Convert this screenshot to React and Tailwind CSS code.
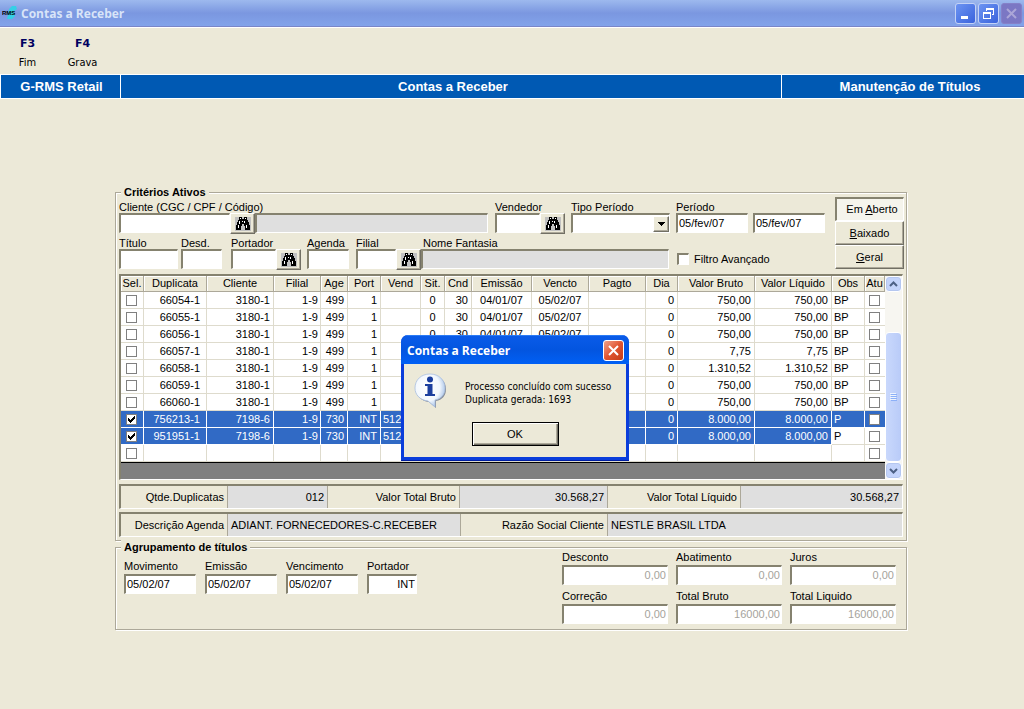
const columns = [
  { key: 'dup', label: 'Duplicata', width: 63, cell: 'text-right pr-[6px]' },
  { key: 'cli', label: 'Cliente', width: 67, cell: 'text-right pr-[3px]' },
  { key: 'fil', label: 'Filial', width: 47, cell: 'text-right pr-[2px]' },
  { key: 'age', label: 'Age', width: 27, cell: 'text-right pr-[3px]' },
  { key: 'port', label: 'Port', width: 33, cell: 'text-right pr-[3px]' },
  { key: 'vend', label: 'Vend', width: 40, cell: 'text-left pl-[2px]' },
  { key: 'sit', label: 'Sit.', width: 24, cell: 'text-center' },
  { key: 'cnd', label: 'Cnd', width: 27, cell: 'text-right pr-[3px]' },
  { key: 'emi', label: 'Emissão', width: 60, cell: 'text-center' },
  { key: 'ven', label: 'Vencto', width: 57, cell: 'text-center' },
  { key: 'pag', label: 'Pagto', width: 57, cell: 'text-center' },
  { key: 'dia', label: 'Dia', width: 32, cell: 'text-right pr-[3px]' },
  { key: 'bruto', label: 'Valor Bruto', width: 77, cell: 'text-right pr-[3px]' },
  { key: 'liq', label: 'Valor Líquido', width: 77, cell: 'text-right pr-[3px]' },
  { key: 'obs', label: 'Obs', width: 33, cell: 'text-left pl-[2px]' },
]

const base = { cli: '3180-1', fil: '1-9', age: '499', port: '1', dia: '0', obs: 'BP' }
const open = { ...base, sit: '0', cnd: '30', emi: '04/01/07', ven: '05/02/07' }
const picked = { cli: '7198-6', fil: '1-9', age: '730', port: 'INT', vend: '512', dia: '0', obs: 'P', checked: true }

const rows = [
  { ...open, dup: '66054-1', bruto: '750,00', liq: '750,00' },
  { ...open, dup: '66055-1', bruto: '750,00', liq: '750,00' },
  { ...open, dup: '66056-1', bruto: '750,00', liq: '750,00' },
  { ...base, dup: '66057-1', bruto: '7,75', liq: '7,75' },
  { ...base, dup: '66058-1', bruto: '1.310,52', liq: '1.310,52' },
  { ...base, dup: '66059-1', bruto: '750,00', liq: '750,00' },
  { ...base, dup: '66060-1', bruto: '750,00', liq: '750,00' },
  { ...picked, dup: '756213-1', bruto: '8.000,00', liq: '8.000,00', fullRow: true },
  { ...picked, dup: '951951-1', bruto: '8.000,00', liq: '8.000,00' },
  {},
]

const sunken = 'border-t-2 border-l-2 border-b border-r border-t-[#85826f] border-l-[#85826f] border-b-white border-r-white'
const raised = 'border border-t-white border-l-white border-b-[#716f64] border-r-[#716f64] shadow-[inset_-1px_-1px_0_#aca899]'

function Binoculars() {
  return (
    <svg viewBox="0 0 16 14" className="w-4 h-[14px] bg-[#c0c0c0]" shapeRendering="crispEdges">
      <path d="M4 0h3v2h2V0h3v3h1v2h1v3h1v5h-5V9H9V7H7v2H6v4H1V8h1V5h1V3h1z" fill="#000" />
      <path d="M5 1h1v1H5zM10 1h1v1h-1zM4 4h1v3H4zM9 4h1v2H9zM3 8h1v3H3zM11 8h1v3h-1zM7 4h1v1H7z" fill="#fff" />
    </svg>
  )
}

function SearchButton({ label }) {
  return (
    <button aria-label={label} className={`w-[25px] h-[21px] -mb-px shrink-0 grid place-items-center bg-[#ece9d8] ${raised}`}>
      <Binoculars />
    </button>
  )
}

function Field({ id, label, value, width = 'w-full', className = '', inputClass = '', children, ...rest }) {
  return (
    <div className={`flex flex-col ${className}`}>
      <label htmlFor={id} className="h-3 leading-3 whitespace-nowrap">{label}</label>
      <div className="flex">
        <input id={id} defaultValue={value} className={`${width} min-w-0 h-5 px-px pb-[2px] bg-white rounded-none outline-none ${sunken} ${inputClass}`} {...rest} />
        {children}
      </div>
    </div>
  )
}

function Check({ label, checked }) {
  return (
    <span className="inline-grid place-items-center align-top">
      <input type="checkbox" aria-label={label} defaultChecked={checked} className="col-start-1 row-start-1 appearance-none w-[11px] h-[11px] bg-white border border-[#808080]" />
      {checked && (
        <svg viewBox="0 0 7 7" className="col-start-1 row-start-1 w-[7px] h-[7px] pointer-events-none" shapeRendering="crispEdges">
          <path d="M0 2h1v1h1v1h1V3h1V2h1V1h1V0h1v3H6v1H5v1H4v1H3v1H2V6H1V5H0z" fill="#000" />
        </svg>
      )}
    </span>
  )
}

function Group({ title, className = '', children }) {
  return (
    <fieldset className={`relative min-w-0 border border-[#aca899] shadow-[1px_1px_0_#fff,inset_1px_1px_0_#fff] ${className}`}>
      <legend className="absolute -top-2 left-[5px] px-[3px] bg-[#ece9d8] font-bold leading-[14px] whitespace-nowrap">{title}</legend>
      {children}
    </fieldset>
  )
}

function Grid() {
  return (
    <div className={`flex mt-[5px] bg-[#808080] ${sunken}`}>
      <div className="flex-1 min-w-0 pb-4">
        <table className="w-full table-fixed border-separate border-spacing-0 border-b border-black">
          <colgroup>
            <col style={{ width: 23 }} />
            {columns.map(c => <col key={c.key} style={{ width: c.width }} />)}
            <col style={{ width: 20 }} />
          </colgroup>
          <thead>
            <tr className="bg-[#ece9d8]">
              {['Sel.', ...columns.map(c => c.label), 'Atu'].map(label => (
                <th key={label} className="h-4 p-0 leading-[15px] font-normal text-center whitespace-nowrap overflow-hidden border-r border-b border-[#aca899] shadow-[inset_1px_1px_0_#fff]">
                  {label}
                </th>
              ))}
            </tr>
          </thead>
          <tbody>
            {rows.map((row, i) => {
              const on = 'bg-[#316ac5] text-white border-white'
              const off = 'bg-white border-[#dedbcd]'
              return (
                <tr key={i}>
                  <td className={`h-[17px] p-0 pr-px leading-none text-center border-r border-b ${row.checked ? on : off}`}>
                    <Check label={`Selecionar ${row.dup || ''}`} checked={row.checked} />
                  </td>
                  {columns.map(c => {
                    const selected = row.checked && (c.key !== 'obs' || row.fullRow)
                    return (
                      <td key={c.key} className={`h-[17px] py-0 px-0 leading-4 whitespace-nowrap border-r border-b ${c.cell} ${selected ? on : off}`}>
                        {row[c.key]}
                      </td>
                    )
                  })}
                  <td className={`h-[17px] p-0 pr-px leading-none text-center border-b ${row.fullRow ? on : off}`}>
                    <Check label={`Atualizar ${row.dup || ''}`} />
                  </td>
                </tr>
              )
            })}
          </tbody>
        </table>
      </div>

      {/* Scrollbar */}
      <div className="w-[17px] shrink-0 flex flex-col bg-[#f7f6f1]">
        <button aria-label="Rolar para cima" className="h-4 rounded-sm border border-white bg-[#c4d4fb] grid place-items-center shadow-[inset_0_0_0_1px_#b5c7f0]">
          <svg viewBox="0 0 9 6" className="w-[9px] h-[6px]"><path d="M1 5l3.500-3.500L8 5" fill="none" stroke="#4d6185" strokeWidth="2" /></svg>
        </button>
        <div className="flex-[40]" />
        <div className="flex-[130] rounded-sm border border-white bg-linear-to-r from-[#c9d8fc] to-[#b9cbf8] grid place-items-center">
          <svg viewBox="0 0 7 8" className="w-[7px] h-2" shapeRendering="crispEdges">
            <path d="M0 0h6v1H0zM0 2h6v1H0zM0 4h6v1H0zM0 6h6v1H0z" fill="#eef4fe" />
            <path d="M1 1h6v1H1zM1 3h6v1H1zM1 5h6v1H1zM1 7h6v1H1z" fill="#8cb0f8" />
          </svg>
        </div>
        <button aria-label="Rolar para baixo" className="h-[17px] rounded-sm border border-white bg-[#c4d4fb] grid place-items-center shadow-[inset_0_0_0_1px_#b5c7f0]">
          <svg viewBox="0 0 9 6" className="w-[9px] h-[6px]"><path d="M1 1l3.500 3.500L8 1" fill="none" stroke="#4d6185" strokeWidth="2" /></svg>
        </button>
      </div>
    </div>
  )
}

function Cell({ className, children }) {
  return <div className={`h-[22px] leading-[22px] px-[3px] whitespace-nowrap border-r border-[#aca899] last:border-r-0 ${className}`}>{children}</div>
}

function MessageBox() {
  return (
    <div role="dialog" aria-label="Contas a Receber" className="absolute top-[335px] left-[6px] right-0 mx-auto w-[228px] rounded-t-[7px] bg-[#0a3ddb] border-b border-[#001ea0] overflow-hidden">
      <div className="h-[29px] pl-[6px] pr-[5px] flex items-center justify-between bg-linear-to-b from-[#0a5be8] via-[#0355e0] to-[#0060f5] border-t border-[#2a7bf5]">
        <span className="pt-[2px] font-['Open_Sans',sans-serif] font-bold text-xs leading-4 text-white whitespace-nowrap">Contas a Receber</span>
        <button aria-label="Fechar" className="w-[21px] h-[21px] rounded-[3px] border border-white bg-linear-to-br from-[#f0a088] via-[#e05430] to-[#c43c14] grid place-items-center">
          <svg viewBox="0 0 11 11" className="w-[11px] h-[11px]"><path d="M1 1l9 9M10 1l-9 9" stroke="#fff" strokeWidth="2" /></svg>
        </button>
      </div>
      <div className="mx-[3px] mb-[3px] h-[93px] bg-[#ece9d8] flex flex-col items-center">
        <div className="self-stretch flex pt-[9px] pl-2">
          <svg viewBox="0 0 36 36" className="w-9 h-9 shrink-0">
            <defs>
              <radialGradient id="balloon" cx="0.4" cy="0.4" r="0.65">
                <stop offset="0" stopColor="#fff" />
                <stop offset="0.65" stopColor="#f2f7fd" />
                <stop offset="1" stopColor="#a3c0e6" />
              </radialGradient>
            </defs>
            <path d="M19 3c9 0 15 5 15 13 0 7-4 11-10 12v7l-7-6C9 28 4 23 4 16 4 8 10 3 19 3z" fill="#5f6a80" opacity="0.75" />
            <path d="M18 1c9 0 15 6 15 14 0 7-4 11-10 12v7l-7-6C8 27 3 22 3 15 3 7 9 1 18 1z" fill="url(#balloon)" stroke="#a9bfdf" strokeWidth="0.8" />
            <circle cx="18" cy="6.500" r="3" fill="#1c3f9e" />
            <path d="M13 11h7.500v10h2.500v2H13v-2h2.500v-8H13z" fill="#1c3f9e" />
          </svg>
          <p className="pt-[7px] pl-[17px] font-['DejaVu_Sans_Condensed','DejaVu_Sans',sans-serif] text-[10px] leading-[13px] whitespace-nowrap">
            Processo concluído com sucesso<br />
            Duplicata gerada: 1693
          </p>
        </div>
        <button className="mt-[13px] w-[87px] h-6 border border-black bg-[#ece9d8] shadow-[inset_1px_1px_0_#fff,inset_-1px_-1px_0_#716f64,inset_-2px_-2px_0_#aca899]">OK</button>
      </div>
    </div>
  )
}

export default function App() {
  return (
    <div className="relative min-h-screen bg-[#ece9d8] text-black text-[11px] font-['Liberation_Sans',Arial,sans-serif]">
      {/* Title bar */}
      <header className="h-[27px] px-[2px] flex items-center border-b border-[#7a86c8] bg-linear-to-b from-[#9db9ee] via-[#7b97e0] to-[#82a3ea]">
        <svg viewBox="0 0 17 16" className="w-[17px] h-4">
          <path d="M7 4l3-3h4l1 3-3 2 1 5-3 3H5l1-4z" fill="#35cfe6" />
          <text x="0" y="10" fontSize="6" fontWeight="bold" fontFamily="Liberation Sans">RMS</text>
        </svg>
        <h1 className="flex-1 pt-[2px] pl-[2px] font-['Open_Sans',sans-serif] font-bold text-xs leading-4 text-[#d8e4f8]">Contas a Receber</h1>
        <div className="flex gap-[2px]">
          <button aria-label="Minimizar" className="w-[21px] h-[21px] rounded-[3px] border border-[#c3d2f6] bg-linear-to-br from-[#6d94f2] to-[#3a62dc] grid place-items-center">
            <svg viewBox="0 0 13 13" className="w-[13px] h-[13px]"><path d="M2 9h7v3H2z" fill="#fff" /></svg>
          </button>
          <button aria-label="Restaurar" className="w-[21px] h-[21px] rounded-[3px] border border-[#c3d2f6] bg-linear-to-br from-[#6d94f2] to-[#3a62dc] grid place-items-center">
            <svg viewBox="0 0 13 13" className="w-[13px] h-[13px]" shapeRendering="crispEdges">
              <path d="M4 1h8v7h-2V7h1V3H5v1H4zM1 5h8v7H1zM2 7v4h6V7z" fill="#fff" fillRule="evenodd" />
            </svg>
          </button>
          <button aria-label="Fechar janela" disabled className="w-[21px] h-[21px] rounded-[3px] border border-[#8581c8] bg-[#7b77c4] grid place-items-center">
            <svg viewBox="0 0 13 13" className="w-[13px] h-[13px]"><path d="M2 2l9 9M11 2l-9 9" stroke="#aba6d8" strokeWidth="2" /></svg>
          </button>
        </div>
      </header>

      {/* Toolbar */}
      <nav className="h-[47px] border-t border-white flex items-start font-['DejaVu_Sans_Condensed','DejaVu_Sans',sans-serif]">
        {[['F3', 'Fim'], ['F4', 'Grava']].map(([key, label]) => (
          <button key={key} className="w-[55px] pt-[9px] flex flex-col items-center gap-[5px] leading-[14px]">
            <span className="font-['DejaVu_Sans',sans-serif] font-bold text-[#000060]">{key}</span>
            <span>{label}</span>
          </button>
        ))}
      </nav>

      {/* Section band */}
      <div className="flex border-y border-white bg-[#0059b3] text-white text-[13px] font-bold leading-[23px] text-center whitespace-nowrap">
        <div className="w-[121px] pl-[2px] border-x border-white">G-RMS Retail</div>
        <div className="flex-1 pl-1">Contas a Receber</div>
        <div className="w-[243px] pl-[14px] border-l border-white">Manutenção de Títulos</div>
      </div>

      <main className="pt-[93px] pr-[2px]">
        <div className="mx-auto w-full max-w-[792px]">
          <Group title="Critérios Ativos" className="px-[3px] pb-[3px]">
            <div className="flex gap-[10px]">
              <div className="flex-1 pt-2 flex flex-col gap-1">
                <div className="flex">
                  <Field id="cliente" label="Cliente (CGC / CPF / Código)" width="w-[111px]" className="flex-1">
                    <SearchButton label="Buscar cliente" />
                    <output className={`flex-1 h-5 bg-[#dfdfdf] ${sunken}`} />
                  </Field>
                  <Field id="vendedor" label="Vendedor" width="w-[45px]" className="w-[70px] ml-[7px]">
                    <SearchButton label="Buscar vendedor" />
                  </Field>
                  <div className="w-[99px] ml-[6px] flex flex-col">
                    <label htmlFor="tipo" className="h-3 leading-3">Tipo Período</label>
                    <div className={`flex h-5 bg-white ${sunken}`}>
                      <div className="grid flex-1 items-center">
                        <select id="tipo" className="col-start-1 row-start-1 w-full h-[17px] appearance-none outline-none" />
                        <span className={`col-start-1 row-start-1 justify-self-end w-4 h-4 grid place-items-center bg-[#ece9d8] pointer-events-none ${raised}`}>
                          <svg viewBox="0 0 7 4" className="w-[7px] h-1" shapeRendering="crispEdges"><path d="M0 0h7v1H6v1H5v1H4v1H3V3H2V2H1V1H0z" /></svg>
                        </span>
                      </div>
                    </div>
                  </div>
                  <Field id="periodo" label="Período" value="05/fev/07" className="w-[72px] ml-[6px]" />
                  <div className="w-[72px] ml-[5px] pt-3">
                    <input aria-label="Período final" defaultValue="05/fev/07" className={`block w-full h-5 px-px pb-[2px] bg-white outline-none ${sunken}`} />
                  </div>
                </div>
                <div className="flex">
                  <Field id="titulo" label="Título" className="w-[59px]" />
                  <Field id="desd" label="Desd." className="w-[41px] ml-[3px]" />
                  <Field id="portador" label="Portador" width="w-[45px]" className="w-[70px] ml-[9px]">
                    <SearchButton label="Buscar portador" />
                  </Field>
                  <Field id="agenda" label="Agenda" className="w-[42px] ml-[6px]" />
                  <Field id="filial" label="Filial" width="w-[40px]" className="w-[65px] ml-[7px]">
                    <SearchButton label="Buscar filial" />
                  </Field>
                  <div className="flex-1 flex flex-col">
                    <span className="h-3 leading-3 pl-[2px]">Nome Fantasia</span>
                    <output className={`h-5 bg-[#dfdfdf] ${sunken}`} />
                  </div>
                  <label className="w-[148px] ml-2 pt-3 flex items-center gap-[5px]">
                    <input type="checkbox" className={`appearance-none w-3 h-3 bg-white ${sunken}`} />
                    Filtro Avançado
                  </label>
                </div>
              </div>
              <div className="w-[69px] mt-1 -mr-px flex flex-col">
                <button className={`h-6 pl-1 bg-[#f5f4ec] ${sunken}`}>Em <u>A</u>berto</button>
                <button className={`h-6 bg-[#ece9d8] ${raised}`}><u>B</u>aixado</button>
                <button className={`h-6 bg-[#ece9d8] ${raised}`}><u>G</u>eral</button>
              </div>
            </div>

            <Grid />

            {/* Totals */}
            <div className={`mt-1 flex text-right ${sunken}`}>
              <Cell className="w-[107px]">Qtde.Duplicatas</Cell>
              <Cell className="w-[100px] bg-[#dfdfdf]">012</Cell>
              <Cell className="w-[132px]">Valor Total Bruto</Cell>
              <Cell className="w-[148px] bg-[#dfdfdf]">30.568,27</Cell>
              <Cell className="w-[133px]">Valor Total Líquido</Cell>
              <Cell className="flex-1 bg-[#dfdfdf]">30.568,27</Cell>
            </div>
            <div className={`mt-[3px] flex ${sunken}`}>
              <Cell className="w-[107px] text-right">Descrição Agenda</Cell>
              <Cell className="w-[233px] bg-[#dfdfdf]">ADIANT. FORNECEDORES-C.RECEBER</Cell>
              <Cell className="w-[147px] text-right">Razão Social Cliente</Cell>
              <Cell className="flex-1 bg-[#dfdfdf]">NESTLE BRASIL LTDA</Cell>
            </div>
          </Group>

          <Group title="Agrupamento de títulos" className="mt-[6px] pl-2 pr-[10px] pb-[5px] flex justify-between">
            <div className="flex gap-[9px] pt-3">
              <Field id="movimento" label="Movimento" value="05/02/07" className="w-[72px] gap-[2px]" />
              <Field id="emissao" label="Emissão" value="05/02/07" className="w-[72px] gap-[2px]" />
              <Field id="vencimento" label="Vencimento" value="05/02/07" className="w-[72px] gap-[2px]" />
              <Field id="portador2" label="Portador" value="INT" className="w-[50px] gap-[2px]" inputClass="text-right" />
            </div>
            <div className="grid grid-cols-3 gap-x-2 gap-y-[5px] pt-[3px]">
              {[['Desconto', '0,00'], ['Abatimento', '0,00'], ['Juros', '0,00'], ['Correção', '0,00'], ['Total Bruto', '16000,00'], ['Total Liquido', '16000,00']].map(([label, value]) => (
                <Field key={label} id={label} label={label} value={value} className="w-[106px] gap-[2px]" inputClass="text-right text-[#a5a39c]" disabled />
              ))}
            </div>
          </Group>
        </div>
      </main>

      <MessageBox />
    </div>
  )
}
